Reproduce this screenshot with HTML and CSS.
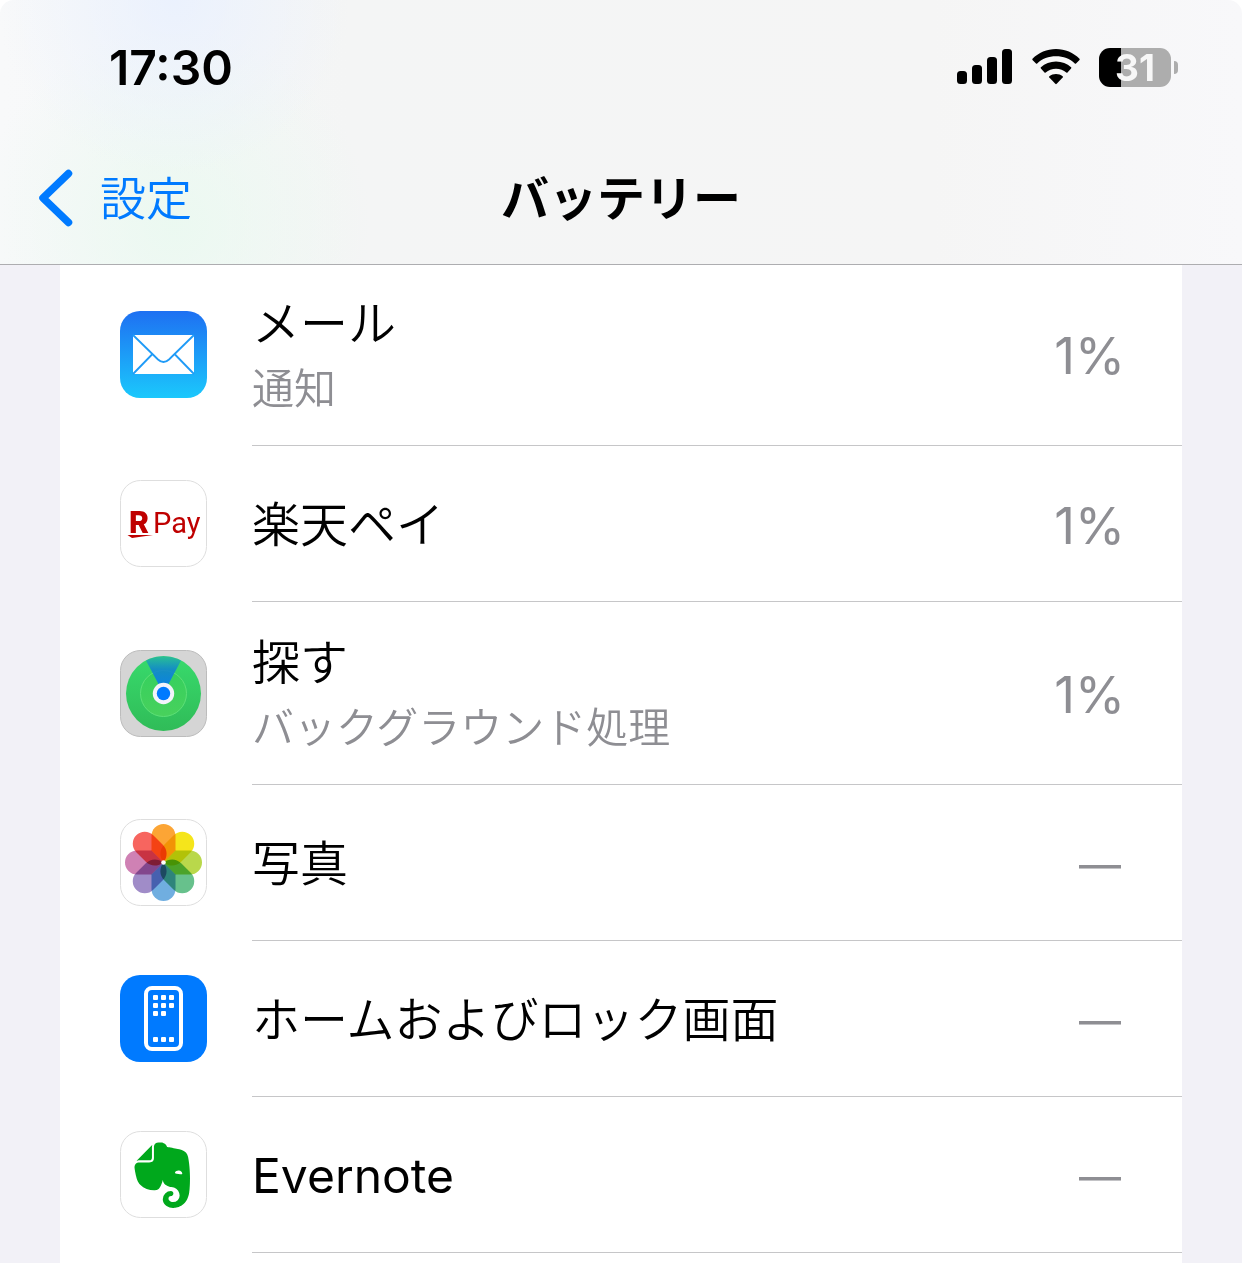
FILE: index.html
```html
<!DOCTYPE html>
<html lang="ja">
<head>
    <meta charset="UTF-8">
    <meta name="viewport" content="width=device-width, initial-scale=1.0">
    <title>バッテリー</title>
    <link rel="stylesheet" href="styles.css">
</head>
<body>
    <header class="header">
        <div class="status-bar">
            <span class="time">17:30</span>
            <div class="status-icons">
                <svg class="signal" width="56" height="36" viewBox="0 0 56 36">
                    <rect x="0" y="22" width="10" height="13" rx="3.500"/>
                    <rect x="15" y="16" width="10" height="19" rx="3.500"/>
                    <rect x="30" y="8" width="10" height="27" rx="3.500"/>
                    <rect x="45" y="0" width="10" height="35" rx="3.500"/>
                </svg>
                <svg class="wifi" width="48" height="36" viewBox="0 0 48 36">
                    <path d="M24 0C33 0 41.500 3.700 47.500 9.700Q48 10.300 47.500 10.900L44 14.500Q43.400 15 42.800 14.500C38 9.800 31.300 7.300 24 7.300S10 9.800 5.200 14.500Q4.600 15 4 14.500L.5 10.900Q0 10.300 .5 9.700C6.500 3.700 15 0 24 0z"/>
                    <path d="M24 12.500C29.800 12.500 35.100 14.700 39.100 18.300Q39.700 18.900 39.100 19.500L35.500 23.600Q34.900 24.100 34.300 23.600C31.600 21.200 28 19.800 24 19.800S16.400 21.200 13.700 23.600Q13.100 24.100 12.500 23.600L8.900 19.500Q8.300 18.900 8.900 18.300C12.900 14.700 18.200 12.500 24 12.500z"/>
                    <path d="M24 25C26.500 25 28.800 25.800 30.600 27.200Q31.300 27.800 30.700 28.500L24.700 34.800Q24 35.500 23.300 34.800L17.300 28.500Q16.700 27.800 17.400 27.200C19.200 25.800 21.500 25 24 25z"/>
                </svg>
                <div class="battery">
                    <div class="battery-body">31</div>
                    <div class="battery-tip"></div>
                </div>
            </div>
        </div>
        <nav class="nav-bar">
            <a class="back" href="#">
                <svg width="34" height="58" viewBox="0 0 34 58">
                    <path d="M29.500 4.500L4 29L29.500 53.500" fill="none" stroke="#007aff" stroke-width="7.500" stroke-linecap="round" stroke-linejoin="round"/>
                </svg>
                <span class="back-text">設定</span>
            </a>
            <h1 class="title">バッテリー</h1>
        </nav>
    </header>

    <main class="list">
        <div class="item tall">
            <svg class="icon" viewBox="0 0 87 87">
                <defs>
                    <linearGradient id="mailBg" x1="0" y1="0" x2="0" y2="1">
                        <stop offset="0" stop-color="#1e70f2"/>
                        <stop offset="1" stop-color="#1bc8fc"/>
                    </linearGradient>
                </defs>
                <rect width="87" height="87" rx="20" fill="url(#mailBg)"/>
                <rect x="13" y="24" width="61" height="39" rx="1" fill="#fff"/>
                <path d="M13 24L38 48.500Q43.500 53.500 49 48.500L74 24M13 63L32 43.500M74 63L55 43.500" fill="none" stroke="#1f9bf7" stroke-width="1.800"/>
            </svg>
            <div class="content">
                <div class="label">
                    <div class="name">メール</div>
                    <div class="detail">通知</div>
                </div>
                <div class="value">1%</div>
            </div>
        </div>

        <div class="item">
            <svg class="icon" viewBox="0 0 87 87">
                <rect x=".5" y=".5" width="86" height="86" rx="20" fill="#fff" stroke="#dedede"/>
                <text class="logo-r" x="9" y="53">R</text>
                <text class="logo-pay" x="33" y="53">Pay</text>
                <path d="M7.500 55H33L12 58z" fill="#bf0000"/>
            </svg>
            <div class="content">
                <div class="label">
                    <div class="name">楽天ペイ</div>
                </div>
                <div class="value">1%</div>
            </div>
        </div>

        <div class="item tall">
            <svg class="icon" viewBox="0 0 87 87">
                <defs>
                    <linearGradient id="findBg" x1="0" y1="0" x2="0" y2="1">
                        <stop offset="0" stop-color="#38da6c"/>
                        <stop offset="1" stop-color="#30bc58"/>
                    </linearGradient>
                    <linearGradient id="findRing" x1="0" y1="0" x2="0" y2="1">
                        <stop offset="0" stop-color="#35d05e"/>
                        <stop offset="1" stop-color="#48d15c"/>
                    </linearGradient>
                    <linearGradient id="findBeam" x1="0" y1="0" x2="0" y2="1">
                        <stop offset="0" stop-color="#0a84e8" stop-opacity=".3"/>
                        <stop offset=".35" stop-color="#0f82d2" stop-opacity=".85"/>
                        <stop offset="1" stop-color="#057df2"/>
                    </linearGradient>
                </defs>
                <rect x=".5" y=".5" width="86" height="86" rx="20" fill="#d5d5d5" stroke="#bcbcbc"/>
                <circle cx="43.500" cy="43.500" r="37.500" fill="url(#findBg)"/>
                <circle cx="43.500" cy="43.500" r="23" fill="url(#findRing)" stroke="#5de077" stroke-width="1"/>
                <path d="M43.500 43.500L26 10.500A37.500 37.500 0 0 1 61 10.500z" fill="url(#findBeam)"/>
                <circle cx="43.500" cy="43.500" r="10.700" fill="#f3f3fa"/>
                <circle cx="43.500" cy="43.500" r="6.700" fill="#007aff"/>
            </svg>
            <div class="content">
                <div class="label">
                    <div class="name">探す</div>
                    <div class="detail">バックグラウンド処理</div>
                </div>
                <div class="value">1%</div>
            </div>
        </div>

        <div class="item">
            <svg class="icon" viewBox="0 0 87 87">
                <defs>
                    <path id="petal" d="M0 0L12 -12V-26.500A12 12 0 0 0 -12 -26.500V-12z"/>
                    <path id="petalRound" d="M0 0C7 -1 12 -6 12 -13V-26.500A12 12 0 0 0 -12 -26.500V-13C-12 -6 -7 -1 0 0z"/>
                </defs>
                <rect x=".5" y=".5" width="86" height="86" rx="20" fill="#fff" stroke="#dedede"/>
                <g class="petals" transform="translate(43.500 43.500)">
                    <use href="#petal" fill="#fca535"/>
                    <use href="#petalRound" fill="#f5e51b" transform="rotate(45)"/>
                    <use href="#petal" fill="#b9d84b" transform="rotate(90)"/>
                    <use href="#petalRound" fill="#67c18c" transform="rotate(135)"/>
                    <use href="#petal" fill="#70aee0" transform="rotate(180)"/>
                    <use href="#petalRound" fill="#a08cc8" transform="rotate(225)"/>
                    <use href="#petal" fill="#cf81b4" transform="rotate(270)"/>
                    <use href="#petalRound" fill="#f7655f" transform="rotate(315)"/>
                </g>
                <circle cx="43.500" cy="43.500" r="2.300" fill="#fff"/>
            </svg>
            <div class="content">
                <div class="label">
                    <div class="name">写真</div>
                </div>
                <div class="value none">—</div>
            </div>
        </div>

        <div class="item">
            <svg class="icon" viewBox="0 0 87 87">
                <rect width="87" height="87" rx="20" fill="#007aff"/>
                <rect x="26" y="13" width="35" height="61" rx="6" fill="none" stroke="#fff" stroke-width="4"/>
                <g fill="#fff">
                    <rect x="33" y="20" width="5" height="5" rx="1"/>
                    <rect x="41" y="20" width="5" height="5" rx="1"/>
                    <rect x="49" y="20" width="5" height="5" rx="1"/>
                    <rect x="33" y="28" width="5" height="5" rx="1"/>
                    <rect x="41" y="28" width="5" height="5" rx="1"/>
                    <rect x="49" y="28" width="5" height="5" rx="1"/>
                    <rect x="33" y="36" width="5" height="5" rx="1"/>
                    <rect x="41" y="36" width="5" height="5" rx="1"/>
                    <rect x="33" y="62" width="5" height="5" rx="1"/>
                    <rect x="41" y="62" width="5" height="5" rx="1"/>
                    <rect x="49" y="62" width="5" height="5" rx="1"/>
                </g>
            </svg>
            <div class="content">
                <div class="label">
                    <div class="name">ホームおよびロック画面</div>
                </div>
                <div class="value none">—</div>
            </div>
        </div>

        <div class="item">
            <svg class="icon" viewBox="0 0 87 87">
                <rect x=".5" y=".5" width="86" height="86" rx="20" fill="#fff" stroke="#dedede"/>
                <path transform="translate(9.500 11.500) scale(2.730)" fill="#00a81c" d="M8.222 5.393c0 .239-.02.637-.256.895-.257.24-.652.259-.888.259H4.552c-.73 0-1.165 0-1.46.04-.159.02-.356.1-.455.14-.04.019-.04 0-.02-.02L8.38.796c.02-.02.04-.02.02.02-.04.099-.118.298-.138.457-.04.298-.04.736-.04 1.472v2.647zm5.348 17.869c-.67-.438-1.026-1.015-1.164-1.373a2.924 2.924 0 01-.217-1.095 3.007 3.007 0 013-3.004c.493 0 .888.398.888.895a.88.88 0 01-.454.776c-.099.06-.237.1-.336.12-.098.02-.473.06-.65.218-.198.16-.356.418-.356.697 0 .298.118.577.316.776.355.358.829.557 1.342.557a2.436 2.436 0 002.427-2.447c0-1.214-.809-2.29-1.875-2.766-.158-.08-.414-.14-.651-.2a8.04 8.04 0 00-.592-.1c-.829-.1-2.901-.755-3.04-2.605 0 0-.611 2.785-1.835 3.54-.118.06-.276.12-.454.16-.177.04-.374.06-.434.06-1.993.12-4.105-.517-5.565-2.03 0 0-.987-.815-1.5-3.103-.118-.558-.355-1.553-.493-2.488-.06-.338-.08-.597-.099-.836 0-.975.592-1.631 1.342-1.73h4.026c.69 0 1.086-.18 1.342-.42.336-.317.415-.775.415-1.312V1.354C9.05.617 9.703 0 10.669 0h.474c.197 0 .434.02.651.04.158.02.296.06.533.12 1.204.298 1.46 1.532 1.46 1.532s2.27.398 3.415.597c1.085.199 3.77.378 4.282 3.104 1.204 6.487.474 12.775.415 12.775-.849 6.129-5.901 5.83-5.901 5.83a4.1 4.1 0 01-2.428-.736zm4.54-13.034c-.652-.06-1.204.2-1.402.697-.04.1-.079.219-.059.278.02.06.06.08.099.1.237.12.631.179 1.204.239.572.06.967.1 1.223.06.04 0 .08-.02.119-.08.04-.06.02-.18.02-.278-.06-.557-.553-.955-1.204-1.015z"/>
            </svg>
            <div class="content">
                <div class="label">
                    <div class="name" lang="en">Evernote</div>
                </div>
                <div class="value none">—</div>
            </div>
        </div>
    </main>
</body>
</html>
```
FILE: styles.css
```css
* {
    box-sizing: border-box;
}
body {
    margin: 0;
    min-height: 100vh;
    display: flex;
    flex-direction: column;
    background: linear-gradient(#fff 32px, #f2f1f7 32px);
    color: #000;
    font-family: "Inter", "Noto Sans CJK JP", sans-serif;
}

/* ヘッダー */
.header {
    position: relative;
    z-index: 1;
    border-bottom: 1px solid #adadb0;
    border-radius: 14px 14px 0 0;
    background:
        radial-gradient(circle at 14% 0, rgba(232, 240, 255, 0.8), rgba(232, 240, 255, 0) 16%),
        radial-gradient(circle at 14% 85%, rgba(234, 249, 240, 0.9), rgba(234, 249, 240, 0) 18%),
        linear-gradient(to right, #f8f9fa, #f4f5f5 28%, #f5f5f5 75%, #f8f8fa);
}
.status-bar {
    display: flex;
    justify-content: space-between;
    align-items: center;
    height: 136px;
    padding: 0 64px 2px 109px;
}
.time {
    font-size: 48px;
    font-weight: 600;
}
.status-icons {
    display: flex;
    align-items: center;
    gap: 19px;
}
.battery {
    display: flex;
    align-items: center;
    gap: 3px;
}
.battery-body {
    width: 72px;
    height: 39px;
    border-radius: 11px;
    background: linear-gradient(to right, #000 30%, #adadad 30%);
    color: #f7f7f7;
    font-size: 37px;
    font-weight: 700;
    line-height: 39px;
    text-align: center;
}
.battery-tip {
    width: 4px;
    height: 13px;
    border-radius: 0 6px 6px 0;
    background: #adadad;
}
.nav-bar {
    display: grid;
    grid-template-columns: 1fr auto 1fr;
    align-items: center;
    height: 128px;
    padding: 0 39px 4px;
}
.back {
    display: flex;
    align-items: center;
    gap: 27px;
    color: #007aff;
    font-size: 46px;
    font-weight: 350;
    text-decoration: none;
}
.back-text {
    padding-bottom: 6px;
}
.title {
    margin: 0;
    padding-bottom: 6px;
    font-size: 48px;
    font-weight: 700;
}

/* アプリ一覧 */
.list {
    flex: 1;
    margin: -2px 60px 0;
    background: #fff;
}
.item {
    display: flex;
    align-items: center;
    height: 156px;
    padding-left: 60px;
}
.item.tall {
    height: 183px;
}
.icon {
    flex: none;
    width: 87px;
    height: 87px;
    margin: 0 45px 1px 0;
}
.content {
    flex: 1;
    display: flex;
    justify-content: space-between;
    align-items: center;
    height: 100%;
    padding: 3px 57px 0 0;
    border-bottom: 1px solid #c6c6c8;
}
.name {
    font-size: 48px;
    font-weight: 350;
    line-height: 66px;
}
.name:lang(en) {
    font-weight: 400;
}
.detail {
    color: #8e8e93;
    font-size: 42px;
    font-weight: 350;
    line-height: 64px;
}
.value {
    color: #8e8e93;
    font-size: 51px;
}
.value.none {
    padding-right: 4px;
    font-size: 42px;
}

/* アイコン */
.petals {
    isolation: isolate;
}
.petals use {
    mix-blend-mode: multiply;
}
.logo-r,
.logo-pay {
    fill: #bf0000;
    font-size: 30px;
    font-weight: 800;
}
.logo-pay {
    font-family: "Roboto", sans-serif;
    font-size: 29px;
    font-weight: 400;
}
```
